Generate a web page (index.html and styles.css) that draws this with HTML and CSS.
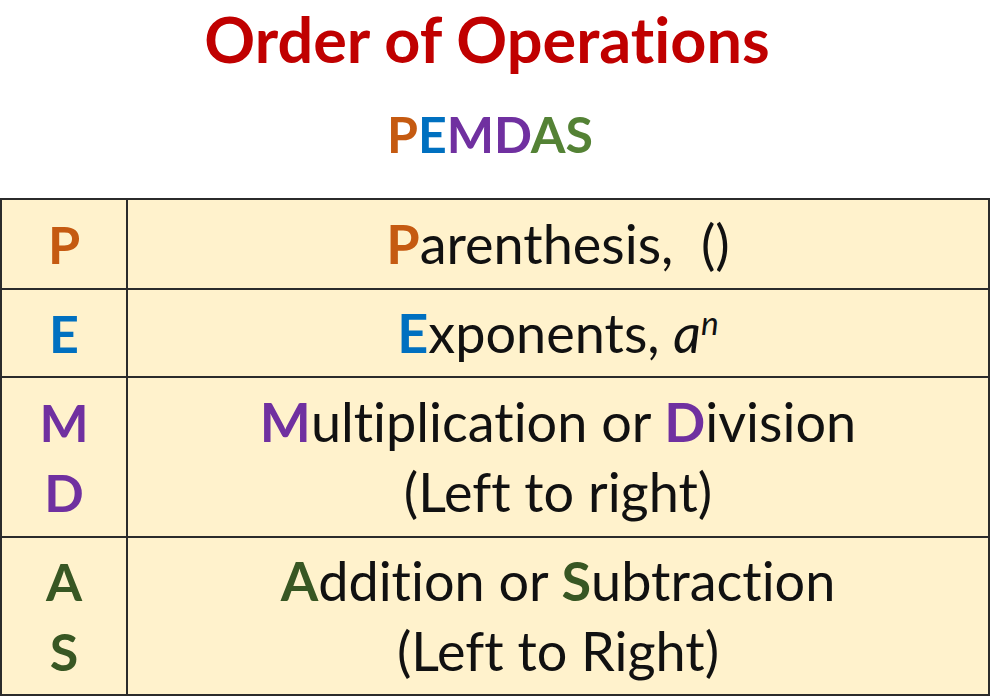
FILE: index.html
```html
<!DOCTYPE html>
<html lang="en">
<head>
<meta charset="utf-8">
<title>Order of Operations</title>
<link rel="stylesheet" href="styles.css">
</head>
<body>
<div class="page">
  <h1 class="title">Order of Operations</h1>
  <h2 class="acronym"><span class="c-p">P</span><span class="c-e">E</span><span class="c-m">M</span><span class="c-m">D</span><span class="c-a">A</span><span class="c-a">S</span></h2>
  <table class="ops">
    <tr class="r1">
      <td class="key"><span class="c-p">P</span></td>
      <td class="desc"><span class="c-p b">P</span>arenthesis,&nbsp; ()</td>
    </tr>
    <tr class="r2">
      <td class="key"><span class="c-e">E</span></td>
      <td class="desc"><span class="c-e b">E</span>xponents, <i class="math">a<sup>n</sup></i></td>
    </tr>
    <tr class="r3">
      <td class="key"><span class="c-m">M</span><br><span class="c-m">D</span></td>
      <td class="desc"><span class="c-m b">M</span>ultiplication or <span class="c-m b">D</span>ivision<br>(Left to right)</td>
    </tr>
    <tr class="r4">
      <td class="key"><span class="c-g">A</span><br><span class="c-g">S</span></td>
      <td class="desc"><span class="c-g b">A</span>ddition or <span class="c-g b">S</span>ubtraction<br>(Left to Right)</td>
    </tr>
  </table>
</div>
</body>
</html>
```

FILE: styles.css
```css
html, body {
  margin: 0;
  padding: 0;
  background: #ffffff;
}
.page {
  width: 992px;
  height: 700px;
  font-family: Lato, "Open Sans", sans-serif;
  font-variant-ligatures: none;
  color: #111;
}
.title {
  margin: 0;
  padding: 1px 18px 0 0;
  height: 96px;
  box-sizing: border-box;
  text-align: center;
  font-size: 63px;
  line-height: 76px;
  font-weight: 700;
  color: #c00000;
}
.acronym {
  margin: 0;
  padding: 3px 12px 0 0;
  height: 102px;
  box-sizing: border-box;
  text-align: center;
  font-size: 50px;
  line-height: 70px;
  font-weight: 700;
}
.c-p { color: #c55a11; }
.c-e { color: #0070c0; }
.c-m { color: #7030a0; }
.c-a { color: #548235; }
.c-g { color: #385723; }
.b { font-weight: 700; }
.ops {
  border-collapse: collapse;
  width: 990px;
  background: #fff2cc;
  font-size: 54px;
}
.ops td {
  border: 2px solid #2b2b2b;
  text-align: center;
  vertical-align: middle;
  padding: 0;
  line-height: 70px;
}
.key {
  width: 124px;
  font-weight: 700;
  font-size: 52px;
}
.r1 { height: 90px; }
.r2 { height: 88px; }
.r3 { height: 160px; }
.r4 { height: 158px; }
.math sup {
  font-size: 0.62em;
  vertical-align: 0.55em;
  line-height: 0;
}
```
